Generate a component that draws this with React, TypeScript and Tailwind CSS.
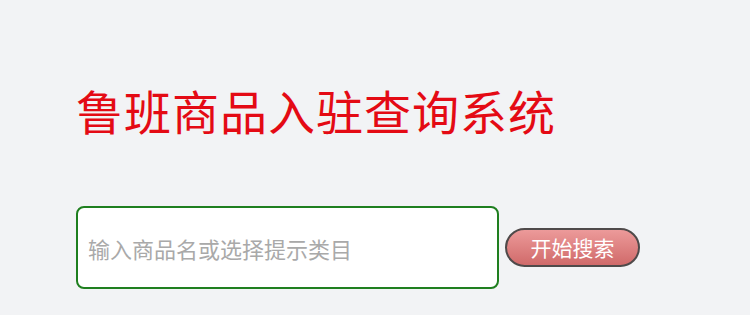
import { useState } from "react";

export default function App() {
  const [query, setQuery] = useState("");

  return (
    <div
      className="min-h-[315px] w-full bg-[#f2f3f5] pl-[76px] pt-[80px]"
      style={{ fontFamily: '"Noto Sans CJK SC", "Noto Sans", sans-serif' }}
    >
      {/* Title */}
      <h1 className="text-[47px] leading-[60px] text-[#e40a14] tracking-[1px]">
        鲁班商品入驻查询系统
      </h1>

      {/* Search row */}
      <div className="mt-[66px] flex items-center gap-[6px]">
        <input
          value={query}
          onChange={(e) => setQuery(e.target.value)}
          placeholder="输入商品名或选择提示类目"
          className="h-[83px] w-[423px] rounded-[8px] border-2 border-[#1f7f1f] bg-white px-[10px] text-[22px] text-[#333] outline-none placeholder:text-[#a9a9a9]"
        />
        <button className="h-[39px] w-[135px] rounded-full border-2 border-[#4f4a4a] bg-gradient-to-b from-[#ec9a9a] to-[#d06a6a] text-[21px] leading-none text-white">
          开始搜索
        </button>
      </div>
    </div>
  );
}
